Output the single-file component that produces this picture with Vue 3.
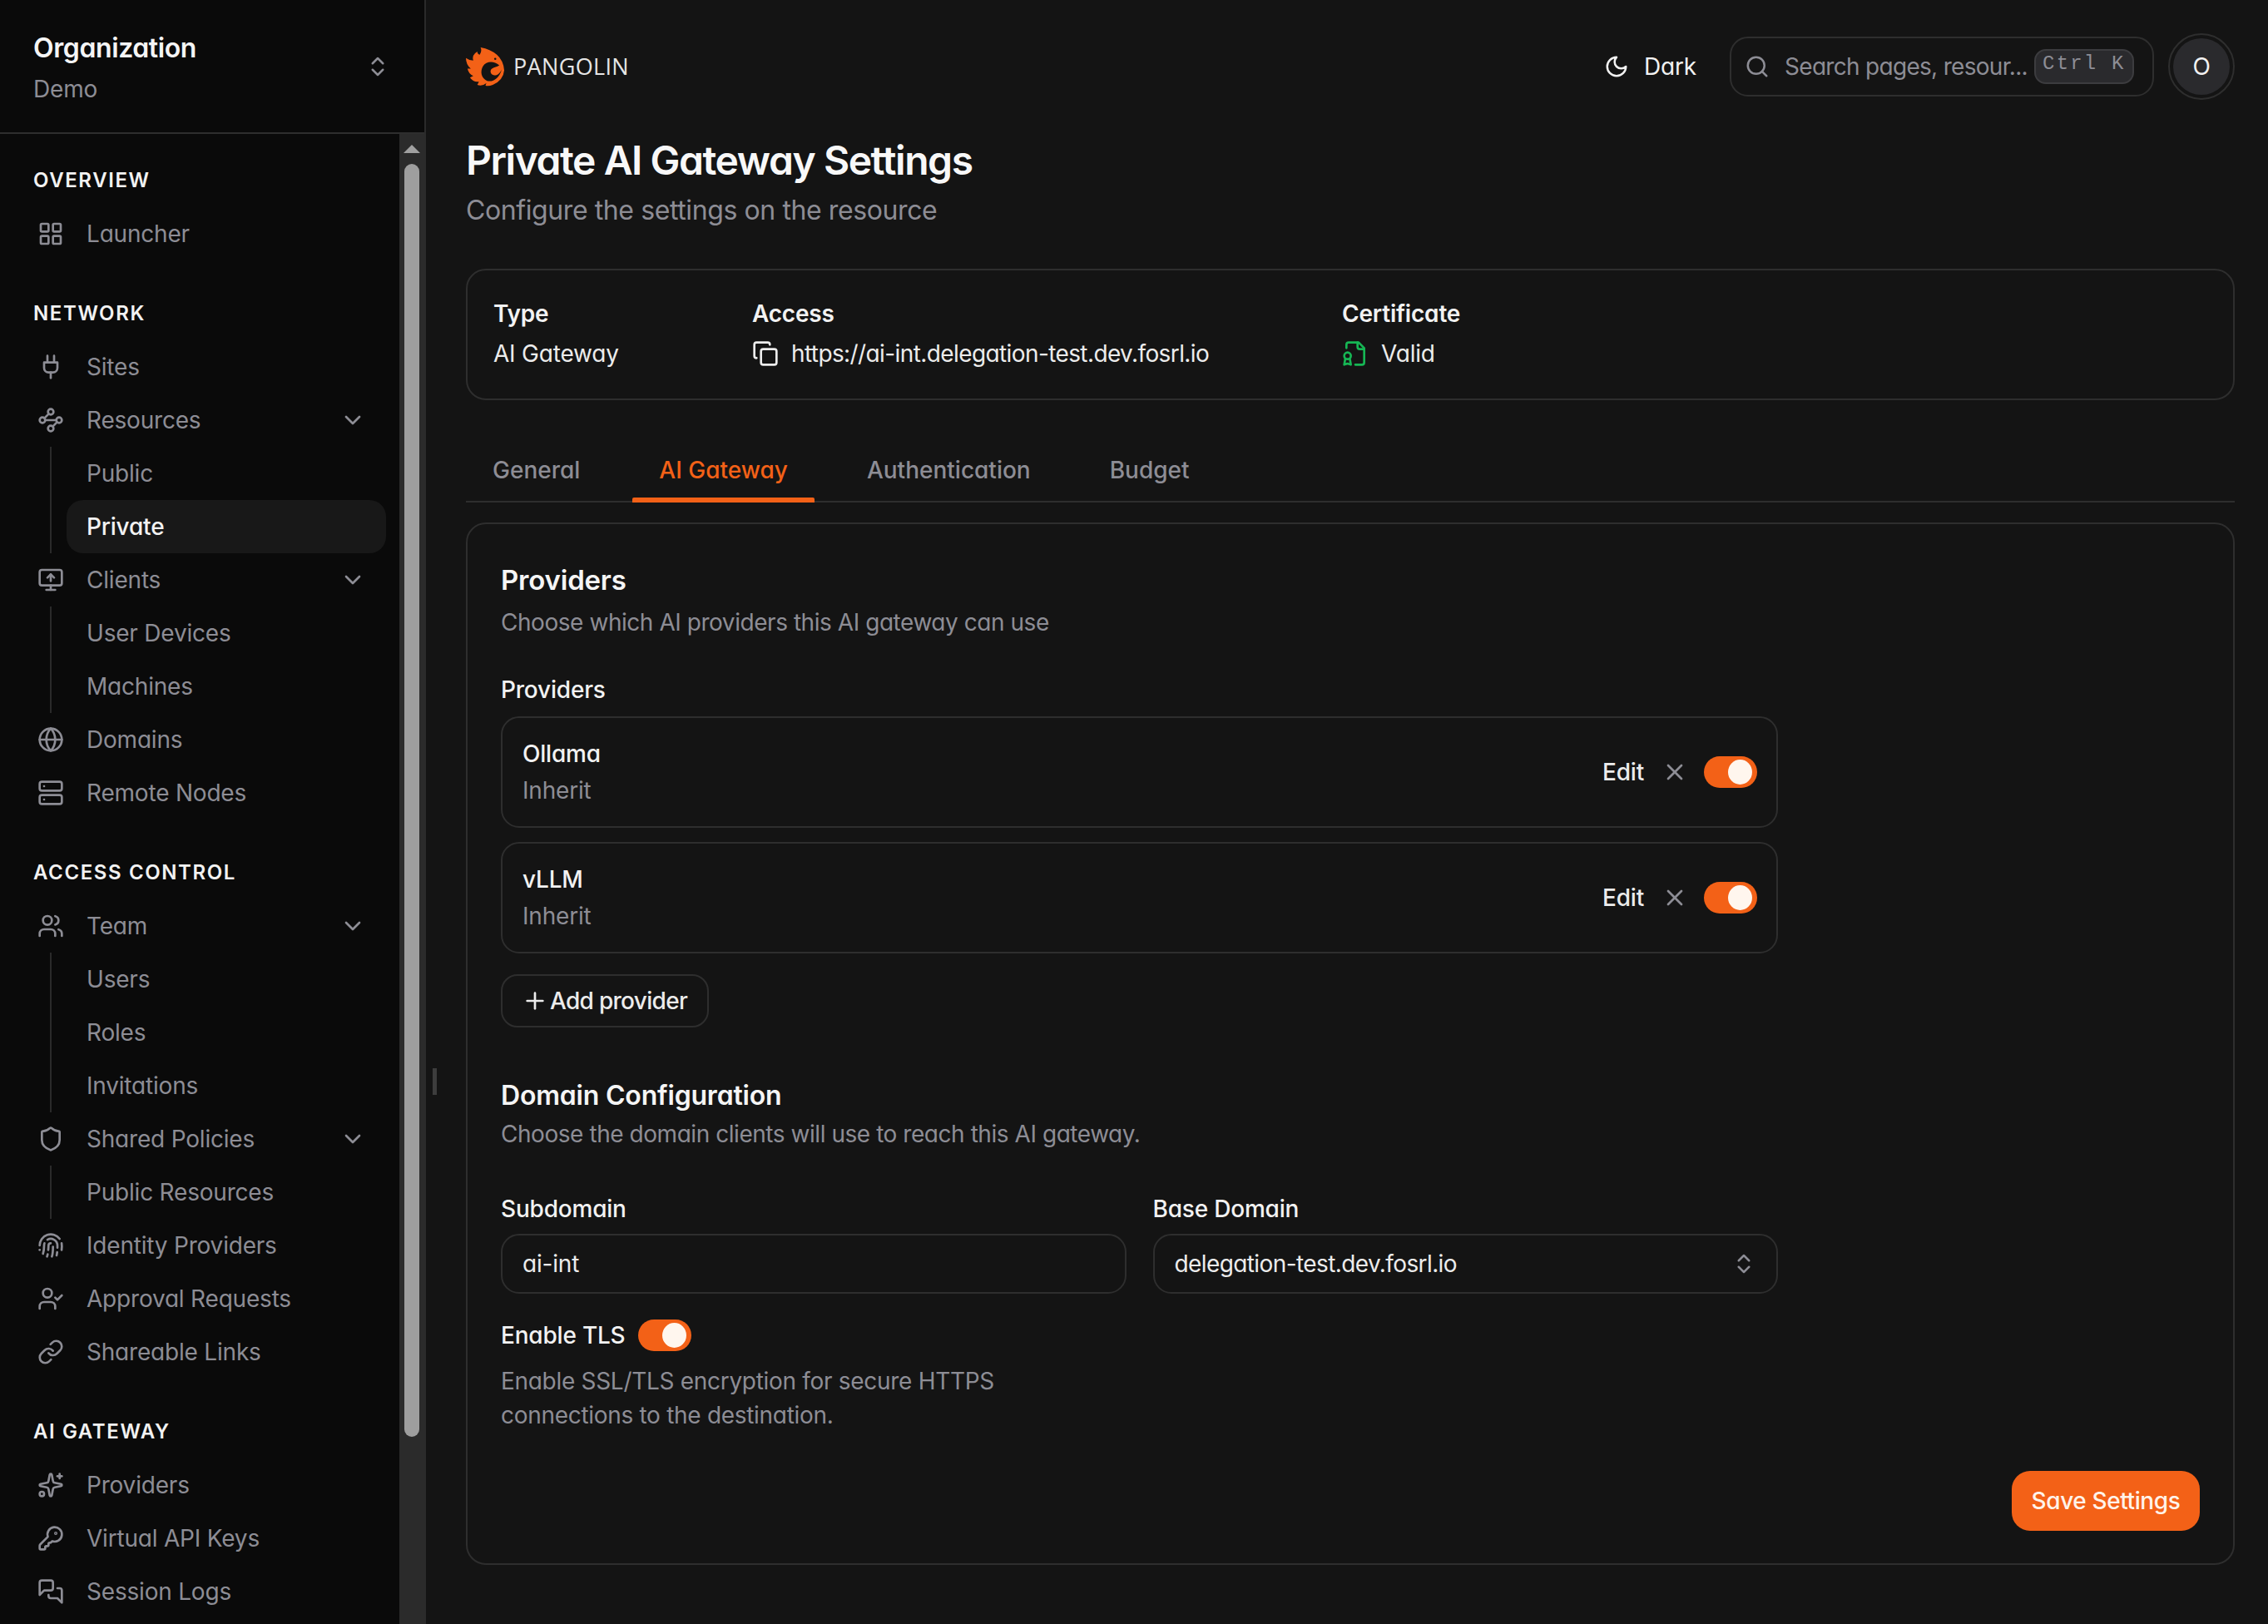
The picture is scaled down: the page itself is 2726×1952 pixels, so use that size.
<script setup>
import { h } from 'vue'

const icons = {
  grid: '<rect x="3" y="3" width="7" height="7" rx="1"/><rect x="14" y="3" width="7" height="7" rx="1"/><rect x="14" y="14" width="7" height="7" rx="1"/><rect x="3" y="14" width="7" height="7" rx="1"/>',
  plug: '<path d="M12 22v-5"/><path d="M9 8V2"/><path d="M15 8V2"/><path d="M18 8v5a4 4 0 0 1-4 4h-4a4 4 0 0 1-4-4V8Z"/>',
  waypoints: '<circle cx="12" cy="4.5" r="2.5"/><path d="m10.2 6.3-3.9 3.9"/><circle cx="4.5" cy="12" r="2.5"/><path d="M7 12h10"/><circle cx="19.5" cy="12" r="2.5"/><path d="m13.8 17.7 3.9-3.9"/><circle cx="12" cy="19.5" r="2.5"/>',
  monitor: '<path d="m9 10 3-3 3 3"/><path d="M12 13V7"/><rect x="2" y="3" width="20" height="14" rx="2"/><path d="M12 17v4"/><path d="M8 21h8"/>',
  globe: '<circle cx="12" cy="12" r="10"/><path d="M12 2a14.5 14.5 0 0 0 0 20 14.5 14.5 0 0 0 0-20"/><path d="M2 12h20"/>',
  server: '<rect x="2" y="2" width="20" height="8" rx="2"/><rect x="2" y="14" width="20" height="8" rx="2"/><path d="M6 6h.01"/><path d="M6 18h.01"/>',
  users: '<path d="M16 21v-2a4 4 0 0 0-4-4H6a4 4 0 0 0-4 4v2"/><circle cx="9" cy="7" r="4"/><path d="M22 21v-2a4 4 0 0 0-3-3.87"/><path d="M16 3.13a4 4 0 0 1 0 7.75"/>',
  shield: '<path d="M20 13c0 5-3.5 7.5-7.66 8.95a1 1 0 0 1-.67-.01C7.5 20.5 4 18 4 13V6a1 1 0 0 1 1-1c2 0 4.5-1.2 6.24-2.72a1.17 1.17 0 0 1 1.52 0C14.51 3.81 17 5 19 5a1 1 0 0 1 1 1z"/>',
  fingerprint: '<path d="M12 10a2 2 0 0 0-2 2c0 1.02-.1 2.51-.26 4"/><path d="M14 13.12c0 2.38 0 6.38-1 8.88"/><path d="M17.29 21.02c.12-.6.43-2.3.5-3.02"/><path d="M2 12a10 10 0 0 1 18-6"/><path d="M2 16h.01"/><path d="M21.8 16c.2-2 .131-5.354 0-6"/><path d="M5 19.5C5.5 18 6 15 6 12a6 6 0 0 1 .34-2"/><path d="M8.65 22c.21-.66.45-1.32.57-2"/><path d="M9 6.8a6 6 0 0 1 9 5.2v2"/>',
  userCheck: '<path d="m16 11 2 2 4-4"/><path d="M16 21v-2a4 4 0 0 0-4-4H6a4 4 0 0 0-4 4v2"/><circle cx="9" cy="7" r="4"/>',
  link: '<path d="M10 13a5 5 0 0 0 7.54.54l3-3a5 5 0 0 0-7.07-7.07l-1.72 1.71"/><path d="M14 11a5 5 0 0 0-7.54-.54l-3 3a5 5 0 0 0 7.07 7.07l1.71-1.71"/>',
  sparkles: '<path d="M11.017 2.814a1 1 0 0 1 1.966 0l1.051 5.558a2 2 0 0 0 1.594 1.594l5.558 1.051a1 1 0 0 1 0 1.966l-5.558 1.051a2 2 0 0 0-1.594 1.594l-1.051 5.558a1 1 0 0 1-1.966 0l-1.051-5.558a2 2 0 0 0-1.594-1.594l-5.558-1.051a1 1 0 0 1 0-1.966l5.558-1.051a2 2 0 0 0 1.594-1.594z"/><path d="M20 2v4"/><path d="M22 4h-4"/><circle cx="4" cy="20" r="2"/>',
  key: '<path d="M2.586 17.414A2 2 0 0 0 2 18.828V21a1 1 0 0 0 1 1h3a1 1 0 0 0 1-1v-1a1 1 0 0 1 1-1h1a1 1 0 0 0 1-1v-1a1 1 0 0 1 1-1h.172a2 2 0 0 0 1.414-.586l.814-.814a6.5 6.5 0 1 0-4-4z"/><circle cx="16.5" cy="7.5" r=".5"/>',
  messages: '<path d="M14 9a2 2 0 0 1-2 2H6l-4 4V4a2 2 0 0 1 2-2h8a2 2 0 0 1 2 2z"/><path d="M18 9h2a2 2 0 0 1 2 2v11l-4-4h-6a2 2 0 0 1-2-2v-1"/>',
  chevronDown: '<path d="m6 9 6 6 6-6"/>',
  chevronsUpDown: '<path d="m7 15 5 5 5-5"/><path d="m7 9 5-5 5 5"/>',
  moon: '<path d="M12 3a6 6 0 0 0 9 9 9 9 0 1 1-9-9Z"/>',
  search: '<path d="m21 21-4.34-4.34"/><circle cx="11" cy="11" r="8"/>',
  copy: '<rect x="8" y="8" width="14" height="14" rx="2"/><path d="M4 16c-1.1 0-2-.9-2-2V4c0-1.1.9-2 2-2h10c1.1 0 2 .9 2 2"/>',
  fileBadge: '<path d="M12 22h6a2 2 0 0 0 2-2V7l-5-5H6a2 2 0 0 0-2 2v3"/><path d="M14 2v4a2 2 0 0 0 2 2h4"/><path d="M5 17a3 3 0 1 0 0-6 3 3 0 0 0 0 6Z"/><path d="M7 16.5 8 22l-3-1-3 1 1-5.5"/>',
  x: '<path d="M18 6 6 18"/><path d="m6 6 12 12"/>',
  plus: '<path d="M5 12h14"/><path d="M12 5v14"/>',
}

const Icon = (props) =>
  h('svg', {
    viewBox: '0 0 24 24',
    width: props.size || 28,
    height: props.size || 28,
    fill: 'none',
    stroke: 'currentColor',
    'stroke-width': props.stroke || 2,
    'stroke-linecap': 'round',
    'stroke-linejoin': 'round',
    innerHTML: icons[props.name],
  })
Icon.props = ['name', 'size', 'stroke']

const sections = [
  { title: 'Overview', items: [{ label: 'Launcher', icon: 'grid' }] },
  {
    title: 'Network',
    items: [
      { label: 'Sites', icon: 'plug' },
      { label: 'Resources', icon: 'waypoints', sub: [{ label: 'Public' }, { label: 'Private', active: true }] },
      { label: 'Clients', icon: 'monitor', sub: [{ label: 'User Devices' }, { label: 'Machines' }] },
      { label: 'Domains', icon: 'globe' },
      { label: 'Remote Nodes', icon: 'server' },
    ],
  },
  {
    title: 'Access Control',
    items: [
      { label: 'Team', icon: 'users', sub: [{ label: 'Users' }, { label: 'Roles' }, { label: 'Invitations' }] },
      { label: 'Shared Policies', icon: 'shield', sub: [{ label: 'Public Resources' }] },
      { label: 'Identity Providers', icon: 'fingerprint' },
      { label: 'Approval Requests', icon: 'userCheck' },
      { label: 'Shareable Links', icon: 'link' },
    ],
  },
  {
    title: 'AI Gateway',
    items: [
      { label: 'Providers', icon: 'sparkles' },
      { label: 'Virtual API Keys', icon: 'key' },
      { label: 'Session Logs', icon: 'messages' },
    ],
  },
]

const tabs = [
  { label: 'General' },
  { label: 'AI Gateway', active: true },
  { label: 'Authentication' },
  { label: 'Budget' },
]

const providers = [{ name: 'Ollama' }, { name: 'vLLM' }]
</script>

<template>
  <div class="app">
    <aside class="sidebar">
      <div class="org">
        <div class="org-text">
          <div class="org-title">Organization</div>
          <div class="org-name">Demo</div>
        </div>
        <Icon class="org-chev" name="chevronsUpDown" :size="30" />
      </div>
      <div class="side-body">
        <nav class="nav">
          <section v-for="s in sections" :key="s.title" class="nav-section">
            <h4 class="nav-head">{{ s.title }}</h4>
            <template v-for="it in s.items" :key="it.label">
              <div class="nav-item">
                <span class="nav-icon"><Icon :name="it.icon" :size="32" /></span>
                <span class="nav-label">{{ it.label }}</span>
                <Icon v-if="it.sub" class="nav-chev" name="chevronDown" :size="32" />
              </div>
              <div v-if="it.sub" class="nav-sub">
                <div v-for="c in it.sub" :key="c.label" class="nav-subitem" :class="{ active: c.active }">{{ c.label }}</div>
              </div>
            </template>
          </section>
        </nav>
        <div class="scroll-track">
          <span class="scroll-arrow"></span>
          <span class="scroll-thumb"></span>
        </div>
      </div>
    </aside>

    <main class="main">
      <span class="resize-handle"></span>
      <header class="topbar">
        <div class="brand">
          <svg class="logo" viewBox="0 0 48 48" width="47" height="47">
            <path fill="#f36117" d="M18 0 Q30 2 38 9 Q46 16 47 28 Q46 40 33 46 Q28 48 24 47 L25 44 Q20 48 14 46 L16 42 Q9 43 5 37 L9 35 Q3 32 2 26 L6 26 Q0 21 0 13 Q4 16 9 16 Q7 9 14 5 Q14 8 17 9 Q20 4 18 0 Z"/>
            <path fill="#141414" d="M41 22 C34 16 25 17 21 23 C17 30 19 38 26 41 C33 43 41 38 44 27 C41 33 37 35 34 34 C30 33 29 28 32 26 C35 24 38 24 41 22 Z"/>
            <circle fill="#141414" cx="36" cy="14" r="1.3"/>
          </svg>
          <span class="brand-name">PANGOLIN</span>
        </div>
        <div class="top-right">
          <div class="theme"><Icon name="moon" :size="30" /><span>Dark</span></div>
          <div class="search">
            <Icon class="search-icon" name="search" :size="30" />
            <span class="search-text">Search pages, resour...</span>
            <kbd class="kbd">Ctrl K</kbd>
          </div>
          <div class="avatar"><span>O</span></div>
        </div>
      </header>

      <h1 class="page-title">Private AI Gateway Settings</h1>
      <p class="page-sub">Configure the settings on the resource</p>

      <div class="info">
        <div class="info-col col-type">
          <div class="info-label">Type</div>
          <div class="info-val">AI Gateway</div>
        </div>
        <div class="info-col col-access">
          <div class="info-label">Access</div>
          <div class="info-val"><Icon name="copy" :size="32" /><span class="tight">https://ai-int.delegation-test.dev.fosrl.io</span></div>
        </div>
        <div class="info-col">
          <div class="info-label">Certificate</div>
          <div class="info-val"><Icon class="green" name="fileBadge" :size="32" /><span>Valid</span></div>
        </div>
      </div>

      <div class="tabs">
        <div v-for="t in tabs" :key="t.label" class="tab" :class="{ active: t.active }">{{ t.label }}</div>
      </div>

      <div class="card">
        <div class="form-col">
          <h2 class="h-providers">Providers</h2>
          <p class="desc">Choose which AI providers this AI gateway can use</p>
          <div class="label label-providers">Providers</div>
          <div class="rows">
            <div v-for="p in providers" :key="p.name" class="row">
              <div>
                <div class="row-name">{{ p.name }}</div>
                <div class="row-sub">Inherit</div>
              </div>
              <div class="row-actions">
                <span class="edit">Edit</span>
                <Icon class="x" name="x" :size="32" />
                <span class="toggle"><i></i></span>
              </div>
            </div>
          </div>
          <div class="add"><Icon name="plus" :size="32" /><span>Add provider</span></div>

          <h3 class="h-domain">Domain Configuration</h3>
          <p class="desc desc-domain">Choose the domain clients will use to reach this AI gateway.</p>
          <div class="fields">
            <div>
              <div class="label">Subdomain</div>
              <div class="input">ai-int</div>
            </div>
            <div>
              <div class="label">Base Domain</div>
              <div class="input select"><span class="tight">delegation-test.dev.fosrl.io</span><Icon class="sel-chev" name="chevronsUpDown" :size="30" /></div>
            </div>
          </div>
          <div class="tls"><span class="label-inline">Enable TLS</span><span class="toggle"><i></i></span></div>
          <p class="tls-desc">Enable SSL/TLS encryption for secure HTTPS connections to the destination.</p>
        </div>
        <div class="save-row"><button class="save">Save Settings</button></div>
      </div>
    </main>
  </div>
</template>

<style>
html, body { margin: 0; background: #141414; }
</style>

<style scoped>
.app {
  width: 2726px;
  height: 1952px;
  display: flex;
  overflow: hidden;
  background: #141414;
  color: #f2f2f2;
  font-family: Inter, "Liberation Sans", sans-serif;
  font-feature-settings: "cv11" 1;
  font-size: 28px;
  line-height: 40px;
  letter-spacing: -0.2px;
}
h1, h2, h3, h4, p { margin: 0; font: inherit; }
svg { flex: none; display: block; }

/* sidebar */
.sidebar {
  width: 512px;
  flex: none;
  display: flex;
  flex-direction: column;
  background: #0a0a0a;
  border-right: 2px solid #2b2b2b;
  box-sizing: border-box;
}
.org {
  height: 161px;
  flex: none;
  box-sizing: border-box;
  padding: 37px 41px 0 40px;
  border-bottom: 2px solid #2e2e2e;
  display: flex;
  justify-content: space-between;
}
.org-title { font-size: 32px; font-weight: 600; line-height: 42px; color: #f5f5f5; letter-spacing: -0.4px; }
.org-name { font-size: 28px; line-height: 40px; margin-top: 8px; color: #8d8d95; }
.org-chev { color: #8d8d95; margin-top: 28px; }
.side-body { flex: 1; display: flex; min-height: 0; }
.nav { flex: 1; padding-top: 40px; overflow: hidden; }
.nav-section { margin-bottom: 48px; }
.nav-head {
  height: 32px;
  line-height: 32px;
  margin: 0 0 16px 40px;
  font-size: 24px;
  font-weight: 600;
  text-transform: uppercase;
  letter-spacing: 1.6px;
  color: #f2f2f2;
}
.nav-item {
  height: 64px;
  display: flex;
  align-items: center;
  color: #8d8d95;
}
.nav-icon { width: 104px; flex: none; padding-left: 45px; box-sizing: border-box; display: flex; }
.nav-label { flex: 1; }
.nav-chev { margin-right: 40px; }
.nav-sub { margin-left: 60px; border-left: 2px solid #2a2a2a; }
.nav-subitem {
  width: 384px;
  height: 64px;
  margin-left: 18px;
  padding-left: 24px;
  box-sizing: border-box;
  display: flex;
  align-items: center;
  color: #8d8d95;
  border-radius: 20px;
}
.nav-subitem.active { background: #181818; color: #f2f2f2; font-weight: 500; }
.scroll-track {
  width: 30px;
  flex: none;
  background: #2b2b2b;
  display: flex;
  flex-direction: column;
  align-items: center;
}
.scroll-arrow {
  margin-top: 13px;
  width: 0;
  height: 0;
  border-left: 10px solid transparent;
  border-right: 10px solid transparent;
  border-bottom: 10px solid #a0a0a0;
}
.scroll-thumb {
  margin-top: 13px;
  width: 18px;
  height: 1530px;
  background: #9e9e9e;
  border-radius: 9px;
}

/* main */
.main {
  flex: 1;
  min-width: 0;
  position: relative;
  box-sizing: border-box;
  padding: 0 40px 0 48px;
}
.resize-handle {
  position: absolute;
  left: 8px;
  top: 1284px;
  width: 5px;
  height: 32px;
  background: #3d3d3d;
}
.topbar { height: 160px; display: flex; justify-content: space-between; align-items: center; }
.brand { display: flex; align-items: center; gap: 10px; }
.brand-name { font-family: "Open Sans", sans-serif; font-size: 27px; font-weight: 500; color: #e6e6e6; letter-spacing: .35px; }
.top-right { display: flex; align-items: center; }
.theme { display: flex; align-items: center; gap: 18px; color: #f2f2f2; margin-right: 40px; }
.search {
  width: 510px;
  height: 72px;
  box-sizing: border-box;
  border: 2px solid #2e2e2e;
  border-radius: 22px;
  display: flex;
  align-items: center;
  padding-left: 16px;
  margin-right: 17px;
  color: #8d8d95;
}
.search-text { margin-left: 18px; white-space: nowrap; letter-spacing: -0.7px; }
.kbd {
  margin-left: 8px;
  width: 120px;
  height: 42px;
  box-sizing: border-box;
  background: #2a2a2d;
  border: 2px solid #3c3c3f;
  border-radius: 14px;
  font-family: "Liberation Mono", monospace;
  font-size: 24px;
  line-height: 32px;
  letter-spacing: 2.2px;
  text-align: center;
  color: #8d8d95;
  white-space: nowrap;
}
.avatar {
  width: 80px;
  height: 80px;
  box-sizing: border-box;
  border-radius: 50%;
  border: 2px solid #2e2e2e;
  padding: 4px;
  display: flex;
}
.avatar span {
  flex: 1;
  border-radius: 50%;
  background: #2a2a2d;
  display: flex;
  align-items: center;
  justify-content: center;
}
.page-title { font-size: 48px; font-weight: 600; line-height: 56px; margin-top: 5px; color: #f8f8f8; letter-spacing: -1.45px; }
.page-sub { font-size: 32px; line-height: 48px; margin-top: 8px; color: #8d8d95; letter-spacing: -0.4px; }

.info {
  margin-top: 46px;
  height: 158px;
  box-sizing: border-box;
  border: 2px solid #2e2e2e;
  border-radius: 24px;
  padding: 34px 31px;
  display: flex;
}
.info-col.col-type { width: 311px; }
.info-col.col-access { width: 709px; }
.info-label { font-weight: 600; line-height: 36px; color: #f2f2f2; }
.info-val { display: flex; align-items: center; gap: 15px; line-height: 40px; margin-top: 10px; color: #ececec; white-space: nowrap; }
.tight { letter-spacing: -0.6px; }
.green { color: #16b654; }

.tabs {
  margin-top: 50px;
  height: 71px;
  border-bottom: 2px solid #2e2e2e;
  display: flex;
  gap: 31px;
}
.tab {
  padding: 0 32px 4px;
  height: 71px;
  display: flex;
  align-items: center;
  color: #8d8d95;
  font-weight: 500;
  letter-spacing: 0;
  box-sizing: border-box;
  position: relative;
}
.tab.active { color: #f36117; }
.tab.active::after {
  content: "";
  position: absolute;
  left: 0;
  right: 0;
  bottom: -2px;
  height: 6px;
  background: #f36117;
  border-radius: 2px 2px 0 0;
}

.card {
  margin-top: 24px;
  height: 1253px;
  box-sizing: border-box;
  border: 2px solid #2e2e2e;
  border-radius: 24px;
  padding: 45px 40px 0;
  position: relative;
}
.form-col { width: 1535px; }
.h-providers { font-size: 33px; font-weight: 600; line-height: 44px; color: #f5f5f5; }
.desc { line-height: 40px; margin-top: 9px; color: #8d8d95; letter-spacing: -0.45px; }
.desc-domain { margin-top: 4px; }
.label { font-weight: 500; line-height: 40px; color: #f2f2f2; }
.label-providers { margin-top: 41px; }
.rows { margin-top: 12px; display: flex; flex-direction: column; gap: 17px; }
.row {
  height: 134px;
  box-sizing: border-box;
  border: 2px solid #2e2e2e;
  border-radius: 22px;
  display: flex;
  justify-content: space-between;
  align-items: center;
  padding: 0 23px 0 24px;
}
.row-name { font-weight: 500; line-height: 40px; color: #f2f2f2; }
.row-sub { line-height: 40px; margin-top: 4px; color: #8d8d95; }
.row-actions { display: flex; align-items: center; }
.edit { color: #ececec; font-weight: 500; margin-right: 21px; }
.x { color: #8d8d95; margin-right: 19px; }
.toggle {
  width: 64px;
  height: 38px;
  flex: none;
  box-sizing: border-box;
  padding: 4px 6px;
  background: #f36117;
  border-radius: 19px;
  display: flex;
  justify-content: flex-end;
}
.toggle i { width: 29px; height: 30px; border-radius: 50%; background: #fff6ee; display: block; }
.add {
  margin-top: 25px;
  width: 250px;
  height: 64px;
  box-sizing: border-box;
  border: 2px solid #2e2e2e;
  border-radius: 20px;
  display: flex;
  align-items: center;
  padding-left: 23px;
  gap: 2px;
  color: #ececec;
  font-weight: 500;
  letter-spacing: -0.7px;
}
.h-domain { margin-top: 60px; font-size: 32px; font-weight: 600; line-height: 44px; color: #f5f5f5; }
.fields { margin-top: 50px; display: grid; grid-template-columns: 1fr 1fr; gap: 32px; }
.input {
  margin-top: 10px;
  height: 72px;
  box-sizing: border-box;
  border: 2px solid #2e2e2e;
  border-radius: 22px;
  padding: 0 24px;
  display: flex;
  align-items: center;
  color: #ececec;
}
.select { justify-content: space-between; }
.sel-chev { color: #8d8d95; }
.tls { margin-top: 30px; display: flex; align-items: center; gap: 15px; }
.label-inline { font-weight: 500; color: #f2f2f2; }
.tls-desc { width: 640px; margin-top: 15px; line-height: 41px; color: #8d8d95; letter-spacing: -0.3px; }
.save-row { position: absolute; right: 40px; bottom: 39px; }
.save {
  width: 226px;
  height: 72px;
  border: 0;
  border-radius: 22px;
  background: #f36117;
  color: #fff3ea;
  font: inherit;
  font-feature-settings: inherit;
  font-weight: 500;
  letter-spacing: -0.4px;
}
</style>
